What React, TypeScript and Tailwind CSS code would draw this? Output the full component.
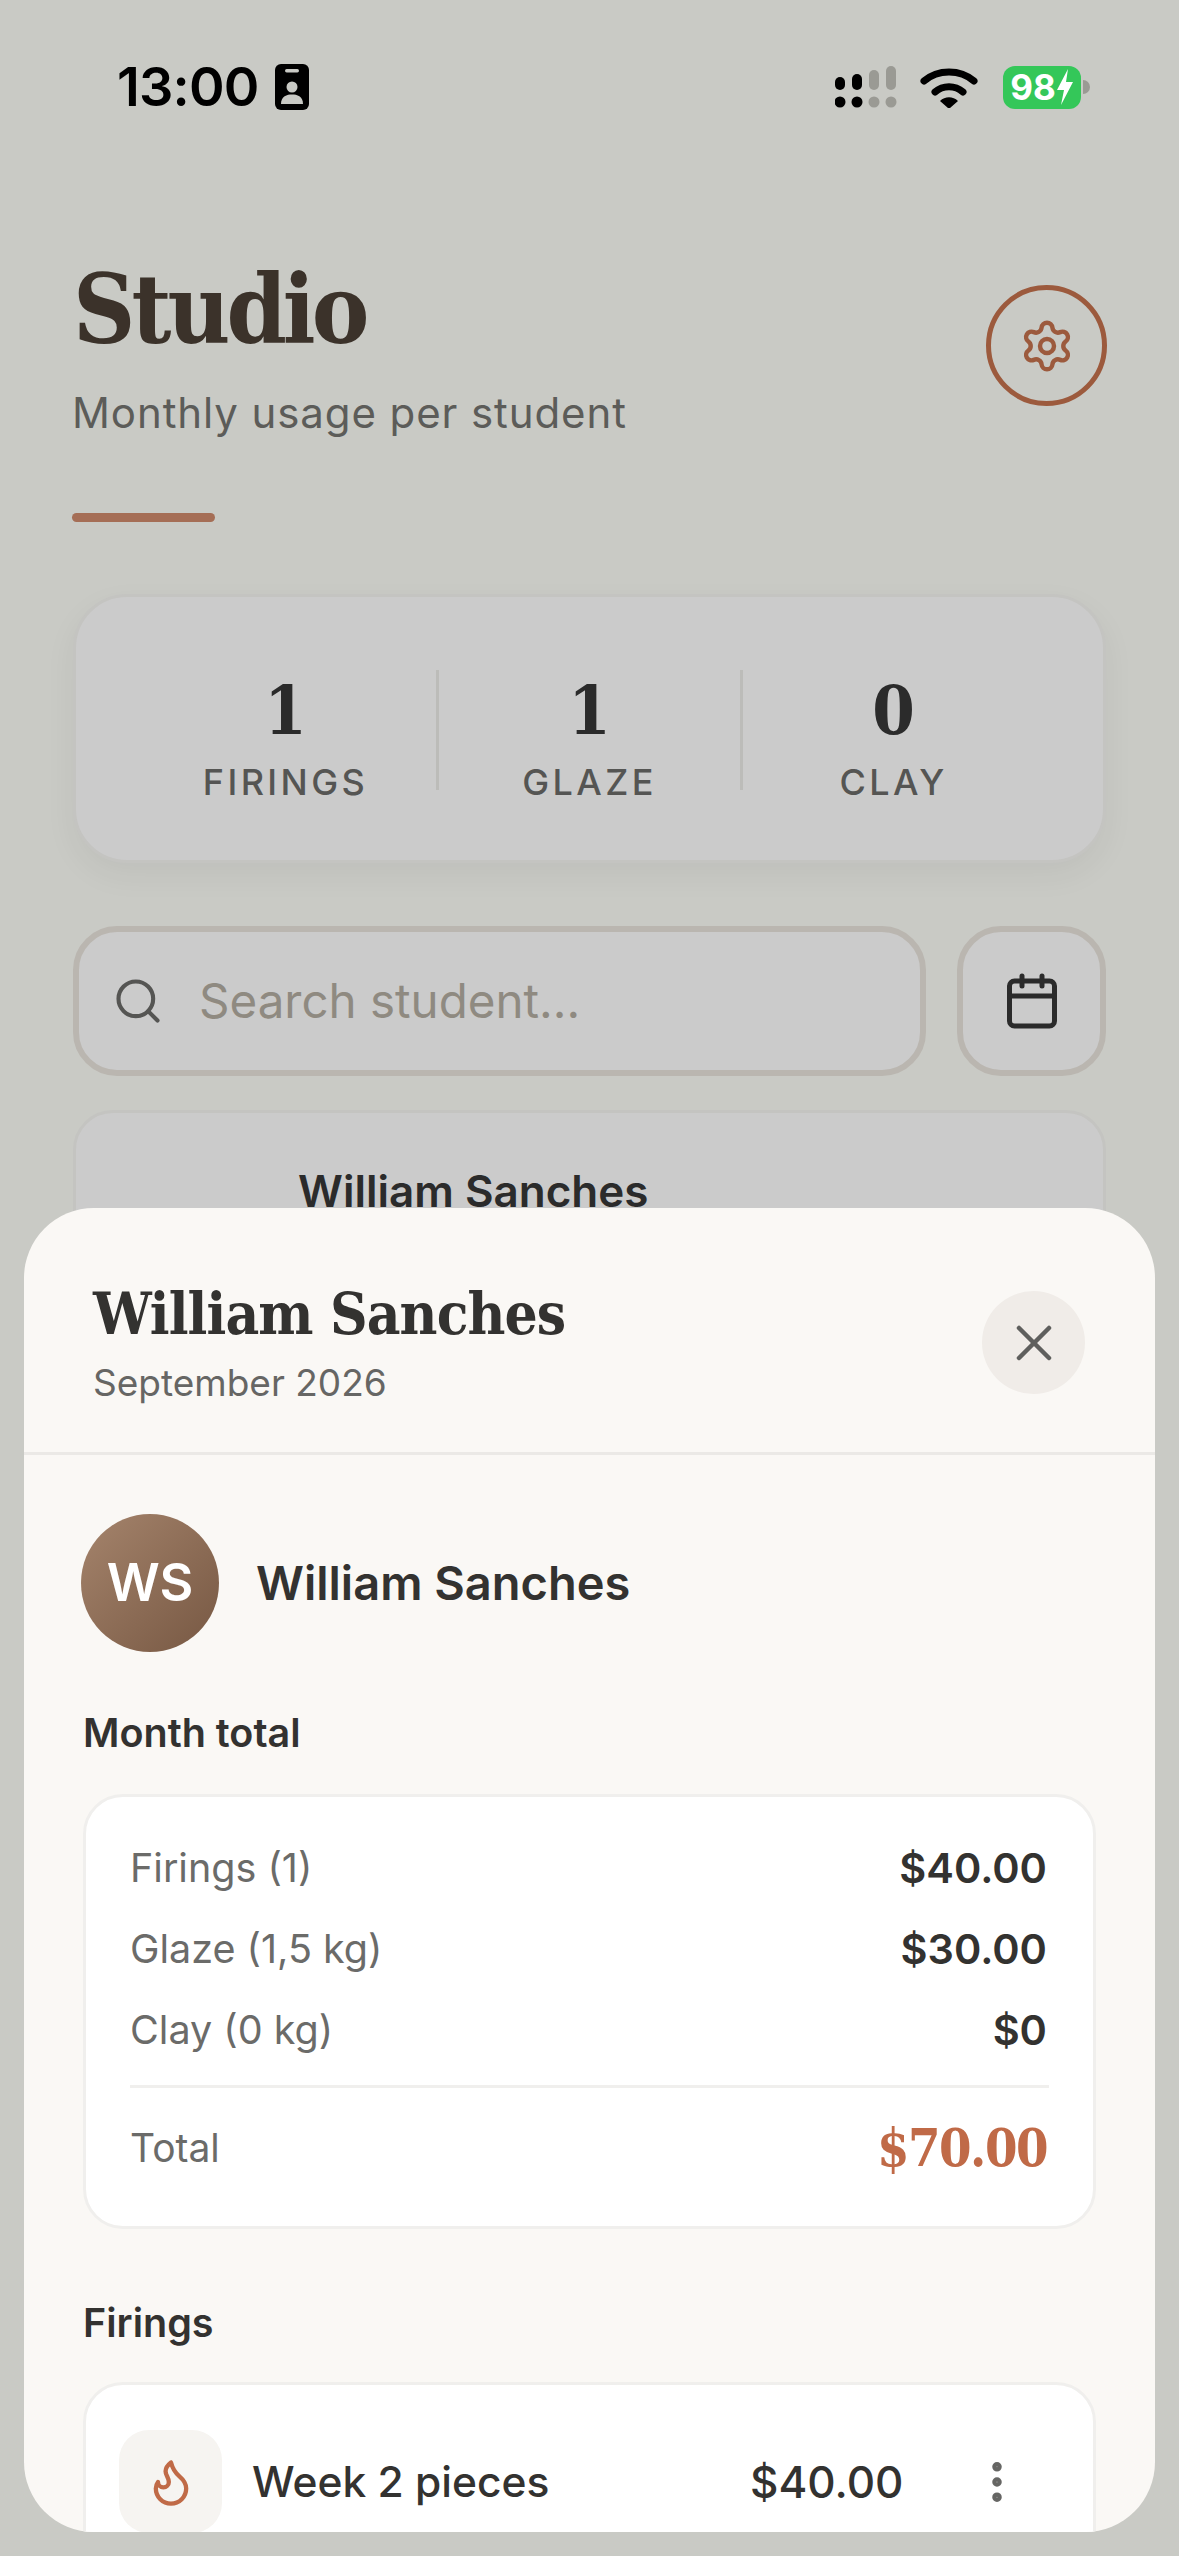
import { Calendar, EllipsisVertical, Flame, Search, Settings, X } from 'lucide-react'

const stats = [
  { value: '1', label: 'FIRINGS' },
  { value: '1', label: 'GLAZE' },
  { value: '0', label: 'CLAY' },
]

const totals = [
  { label: 'Firings (1)', amount: '$40.00' },
  { label: 'Glaze (1,5 kg)', amount: '$30.00' },
  { label: 'Clay (0 kg)', amount: '$0' },
]

function SignalIcon() {
  return (
    <svg width="62" height="42" viewBox="0 0 62 42" className="block">
      <rect x="0" y="11" width="10" height="13" rx="5" fill="#000" />
      <rect x="17" y="8" width="10" height="16" rx="5" fill="#000" />
      <rect x="34" y="4" width="10" height="20" rx="5" fill="#9a9a94" />
      <rect x="51" y="0" width="10" height="24" rx="5" fill="#9a9a94" />
      <circle cx="5" cy="36" r="5.5" fill="#000" />
      <circle cx="22" cy="36" r="5.5" fill="#000" />
      <circle cx="39" cy="36" r="5.5" fill="#9a9a94" />
      <circle cx="56" cy="36" r="5.5" fill="#9a9a94" />
    </svg>
  )
}

function WifiIcon() {
  return (
    <svg width="58" height="42" viewBox="0 0 58 42" className="block">
      <path d="M4 15 C18 3 40 3 54 15" fill="none" stroke="#000" strokeWidth="7" strokeLinecap="round" />
      <path d="M15 26 C23 19 35 19 43 26" fill="none" stroke="#000" strokeWidth="7" strokeLinecap="round" />
      <path d="M20 35 C25 30 33 30 38 35 L30 42 Q29 43 28 42 Z" fill="#000" />
    </svg>
  )
}

function BadgeIcon() {
  return (
    <svg width="34" height="46" viewBox="0 0 34 46" className="block">
      <rect x="0" y="0" width="34" height="46" rx="6" fill="#000" />
      <rect x="10" y="5" width="14" height="3.5" rx="1.7" fill="#c9cac5" />
      <circle cx="17" cy="23" r="5.5" fill="#c9cac5" />
      <path d="M6 40 C6 32 12 30.5 17 30.5 C22 30.5 28 32 28 40 Z" fill="#c9cac5" />
    </svg>
  )
}

function BatteryIcon() {
  return (
    <div className="flex items-center">
      <div className="flex h-[43px] w-[78px] items-center justify-center rounded-[12px] bg-[#34c759] font-['Inter',sans-serif] text-[35px] leading-[43px] font-bold text-white">
        98
        <svg width="18" height="36" viewBox="0 0 18 36" className="block">
          <path d="M12 0 L1 21 H8 L5 36 L17 13 H10 Z" fill="#fff" />
        </svg>
      </div>
      <div className="ml-[2px] h-[14px] w-[7px] rounded-r-full bg-[#9a9a94]" />
    </div>
  )
}

export default function App() {
  return (
    <div className="relative flex h-[2556px] w-[1179px] flex-col overflow-hidden bg-[#c9cac5] font-['Inter',sans-serif]">
      {/* status bar */}
      <div className="mt-[64px] flex h-[46px] items-center justify-between pr-[89px] pl-[117px]">
        <div className="flex items-center gap-[16px]">
          <span className="text-[54px] leading-[46px] font-semibold tracking-[-0.8px] text-black">13:00</span>
          <BadgeIcon />
        </div>
        <div className="flex items-center">
          <SignalIcon />
          <div className="mr-[25px] ml-[23px]">
            <WifiIcon />
          </div>
          <BatteryIcon />
        </div>
      </div>

      <div className="flex flex-col px-[73px]">
        {/* heading */}
        <div className="mt-[140px] -mr-[1px] -ml-[1px] flex items-start justify-between">
          <div>
            <h1 className="pl-[1px] font-['DejaVu_Serif_Condensed','DejaVu_Serif',serif] text-[96px] leading-[120px] font-bold tracking-[-3.9px] text-[#3b322a]">
              Studio
            </h1>
            <p className="mt-[18px] text-[42px] leading-[50px] tracking-[0.9px] text-[#5c5c59]">Monthly usage per student</p>
          </div>
          <button className="mt-[35px] flex h-[121px] w-[121px] items-center justify-center rounded-full border-[5px] border-[#9c5a3d]">
            <Settings size={56} strokeWidth={1.9} className="text-[#9c5a3d]" />
          </button>
        </div>
        <div className="mt-[75px] -ml-[1px] h-[9px] w-[143px] rounded-full bg-[#a56e56]" />

        {/* stats */}
        <div className="mt-[72px] flex h-[269px] w-[1033px] items-start rounded-[54px] border-[3px] border-[#c4c4c1] bg-[#cbcbcb] pt-[73px] pl-[59px] shadow-[0_12px_32px_rgba(0,0,0,0.05)]">
          {stats.map((s, i) => (
            <div key={s.label} className="flex items-start">
              {i > 0 && <div className="h-[120px] w-[3px] bg-[#bcbcb9]" />}
              <div className="flex w-[301px] flex-col items-center">
                <span className="pt-[2px] font-['DejaVu_Serif_Condensed','DejaVu_Serif',serif] text-[68px] leading-[76px] font-bold text-[#2b2b2b]">{s.value}</span>
                <span className="mt-[12px] text-[36px] leading-[44px] font-medium tracking-[3.4px] text-[#555553]">{s.label}</span>
              </div>
            </div>
          ))}
        </div>

        {/* search */}
        <div className="mt-[63px] flex gap-[31px]">
          <div className="flex h-[150px] w-[853px] items-center rounded-[44px] border-[6px] border-[#bab6b0] bg-[#cbcbcb] pl-[33px]">
            <Search size={52} strokeWidth={1.9} className="text-[#555553]" />
            <span className="ml-[35px] text-[47.5px] leading-[56px] text-[#8f8a81]">Search student...</span>
          </div>
          <button className="flex h-[150px] w-[149px] items-center justify-center rounded-[44px] border-[6px] border-[#bab6b0] bg-[#cbcbcb]">
            <Calendar size={60} strokeWidth={2} className="text-[#2b2b2b]" />
          </button>
        </div>

        {/* student card behind the sheet */}
        <div className="mt-[34px] h-[300px] w-[1033px] rounded-[40px] border-[3px] border-[#c4c4c1] bg-[#cbcbcb] pt-[52px] pl-[222px]">
          <span className="text-[44px] leading-[52px] font-semibold text-[#2b2b2b]">William Sanches</span>
        </div>
      </div>

      {/* bottom sheet */}
      <div className="absolute top-[1208px] left-[24px] flex h-[1324px] w-[1131px] flex-col overflow-hidden rounded-[70px] bg-[#faf8f5]">
        <div className="mx-auto mt-[15px] h-[14px] w-[114px] rounded-full bg-[#8a7f6e]" />

        <div className="mt-[59px] flex items-start justify-between border-b-[3px] border-[#ebe9e6] pr-[70px] pb-[47px] pl-[69px]">
          <div>
            <h2 className="font-['DejaVu_Serif_Condensed','DejaVu_Serif',serif] text-[58px] leading-[64px] font-bold tracking-[-0.9px] text-[#333230]">William Sanches</h2>
            <p className="mt-[15px] text-[37px] leading-[44px] text-[#666664]">September 2026</p>
          </div>
          <button className="mt-[9px] flex h-[103px] w-[103px] items-center justify-center rounded-full bg-[#f0ece8]">
            <X size={60} strokeWidth={1.8} className="text-[#5f5f5d]" />
          </button>
        </div>

        <div className="flex flex-col px-[59px]">
          <div className="mt-[59px] ml-[-2px] flex items-center gap-[37px]">
            <div className="flex h-[138px] w-[138px] items-center justify-center rounded-full bg-gradient-to-br from-[#a5846c] to-[#775843] text-[52px] leading-[60px] font-semibold text-white">
              WS
            </div>
            <span className="text-[47px] leading-[56px] font-semibold text-[#333230]">William Sanches</span>
          </div>

          <h3 className="mt-[57px] text-[39.5px] leading-[48px] font-semibold text-[#333230]">Month total</h3>
          <div className="mt-[37px] rounded-[40px] border-[3px] border-[#f0efed] bg-white pt-[47px] pr-[46px] pb-[43px] pl-[44px]">
            <div className="flex flex-col gap-[33px]">
              {totals.map((t) => (
                <div key={t.label} className="flex items-center justify-between">
                  <span className="text-[39.5px] leading-[48px] text-[#6b6b69]">{t.label}</span>
                  <span className="text-[41.5px] leading-[48px] font-semibold text-[#333230]">{t.amount}</span>
                </div>
              ))}
            </div>
            <div className="mt-[31px] -mr-[2px] h-[3px] bg-[#f0efed]" />
            <div className="mt-[25px] flex items-center justify-between">
              <span className="text-[39px] leading-[70px] text-[#6b6b69]">Total</span>
              <span className="font-['DejaVu_Serif_Condensed','DejaVu_Serif',serif] text-[52px] leading-[70px] font-bold tracking-[-1.5px] text-[#c06a47]">$70.00</span>
            </div>
          </div>

          <h3 className="mt-[70px] text-[39.5px] leading-[48px] font-semibold text-[#333230]">Firings</h3>
          <div className="mt-[35px] h-[300px] rounded-[40px] border-[3px] border-[#f0efed] bg-white pt-[45px] pl-[33px]">
            <div className="flex items-start">
              <div className="flex h-[103px] w-[103px] items-center justify-center rounded-[30px] bg-[#f6f4f1]">
                <Flame size={52} strokeWidth={2} className="text-[#c06a47]" />
              </div>
              <span className="mt-[25px] ml-[30px] w-[498px] text-[42.5px] leading-[54px] font-medium text-[#333230]">Week 2 pieces</span>
              <span className="mt-[25px] text-[44px] leading-[54px] font-medium text-[#333230]">$40.00</span>
              <EllipsisVertical size={52} strokeWidth={2.4} className="mt-[26px] ml-[68px] text-[#666664]" />
            </div>
          </div>
        </div>
      </div>
    </div>
  )
}
